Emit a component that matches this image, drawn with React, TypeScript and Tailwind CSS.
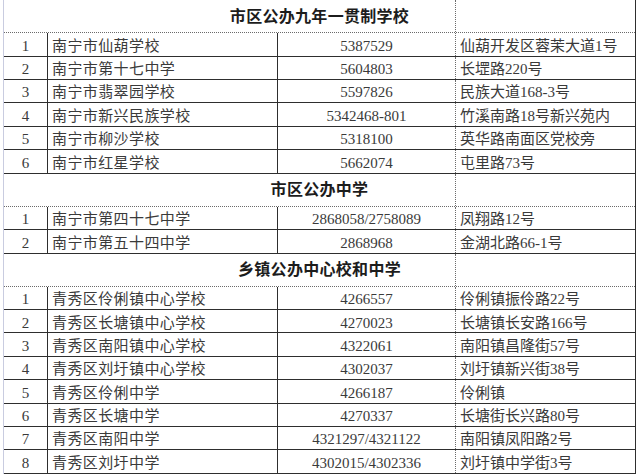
import React from 'react';

type Row = [string, string, string, string];

type Section = {
    title: string;
    rows: Row[];
};

const sections: Section[] = [
    {
        title: '市区公办九年一贯制学校',
        rows: [
            ['1', '南宁市仙葫学校', '5387529', '仙葫开发区蓉茉大道1号'],
            ['2', '南宁市第十七中学', '5604803', '长堽路220号'],
            ['3', '南宁市翡翠园学校', '5597826', '民族大道168-3号'],
            ['4', '南宁市新兴民族学校', '5342468-801', '竹溪南路18号新兴苑内'],
            ['5', '南宁市柳沙学校', '5318100', '英华路南面区党校旁'],
            ['6', '南宁市红星学校', '5662074', '屯里路73号'],
        ],
    },
    {
        title: '市区公办中学',
        rows: [
            ['1', '南宁市第四十七中学', '2868058/2758089', '凤翔路12号'],
            ['2', '南宁市第五十四中学', '2868968', '金湖北路66-1号'],
        ],
    },
    {
        title: '乡镇公办中心校和中学',
        rows: [
            ['1', '青秀区伶俐镇中心学校', '4266557', '伶俐镇振伶路22号'],
            ['2', '青秀区长塘镇中心学校', '4270023', '长塘镇长安路166号'],
            ['3', '青秀区南阳镇中心学校', '4322061', '南阳镇昌隆街57号'],
            ['4', '青秀区刘圩镇中心学校', '4302037', '刘圩镇新兴街38号'],
            ['5', '青秀区伶俐中学', '4266187', '伶俐镇'],
            ['6', '青秀区长塘中学', '4270337', '长塘街长兴路80号'],
            ['7', '青秀区南阳中学', '4321297/4321122', '南阳镇凤阳路2号'],
            ['8', '青秀区刘圩中学', '4302015/4302336', '刘圩镇中学街3号'],
        ],
    },
];

const SectionHeader: React.FC<{ title: string }> = ({ title }) => (
    <div className="grid grid-cols-[451px_180px] h-[33.2px] border-b border-dotted border-[#6b6b6b]">
        <div className="col-span-2 row-start-1 col-start-1 flex items-center justify-center pt-[1px] text-[16px] font-bold text-[#1c1c1c] tracking-[0.3px]">
            {title}
        </div>
        <div className="row-start-1 col-start-2 border-l border-dotted border-[#6b6b6b]" />
    </div>
);

const DataRow: React.FC<{ row: Row }> = ({ row }) => {
    const [no, name, phone, addr] = row;
    return (
        <div className="flex h-[23.4px] border-b border-[#2e2e2e] text-[15px] text-[#3a3a3a]">
            <div className="w-[43px] flex items-center justify-center pt-[3px]">{no}</div>
            <div className="w-[230px] flex items-center pl-[4px] pt-[3px] border-l border-[#2e2e2e] tracking-[0.4px]">
                {name}
            </div>
            <div className="w-[178px] flex items-center justify-center pt-[3px] border-l border-[#2e2e2e]">
                {phone}
            </div>
            <div className="w-[180px] flex items-center pl-[4px] pt-[3px] border-l border-dotted border-[#6b6b6b] whitespace-nowrap">
                {addr}
            </div>
        </div>
    );
};

export default function App() {
    return (
        <div
            className="w-[640px] h-[476px] bg-white overflow-hidden"
            style={{ fontFamily: '"Liberation Serif", "Noto Sans CJK SC", serif' }}
        >
            <div className="ml-[3px] w-[633px] border-l border-[#c9cce0] border-r border-r-[#2e2e2e]">
                {sections.map((s) => (
                    <div key={s.title}>
                        <SectionHeader title={s.title} />
                        {s.rows.map((r) => (
                            <DataRow key={s.title + r[0]} row={r} />
                        ))}
                    </div>
                ))}
            </div>
        </div>
    );
}
